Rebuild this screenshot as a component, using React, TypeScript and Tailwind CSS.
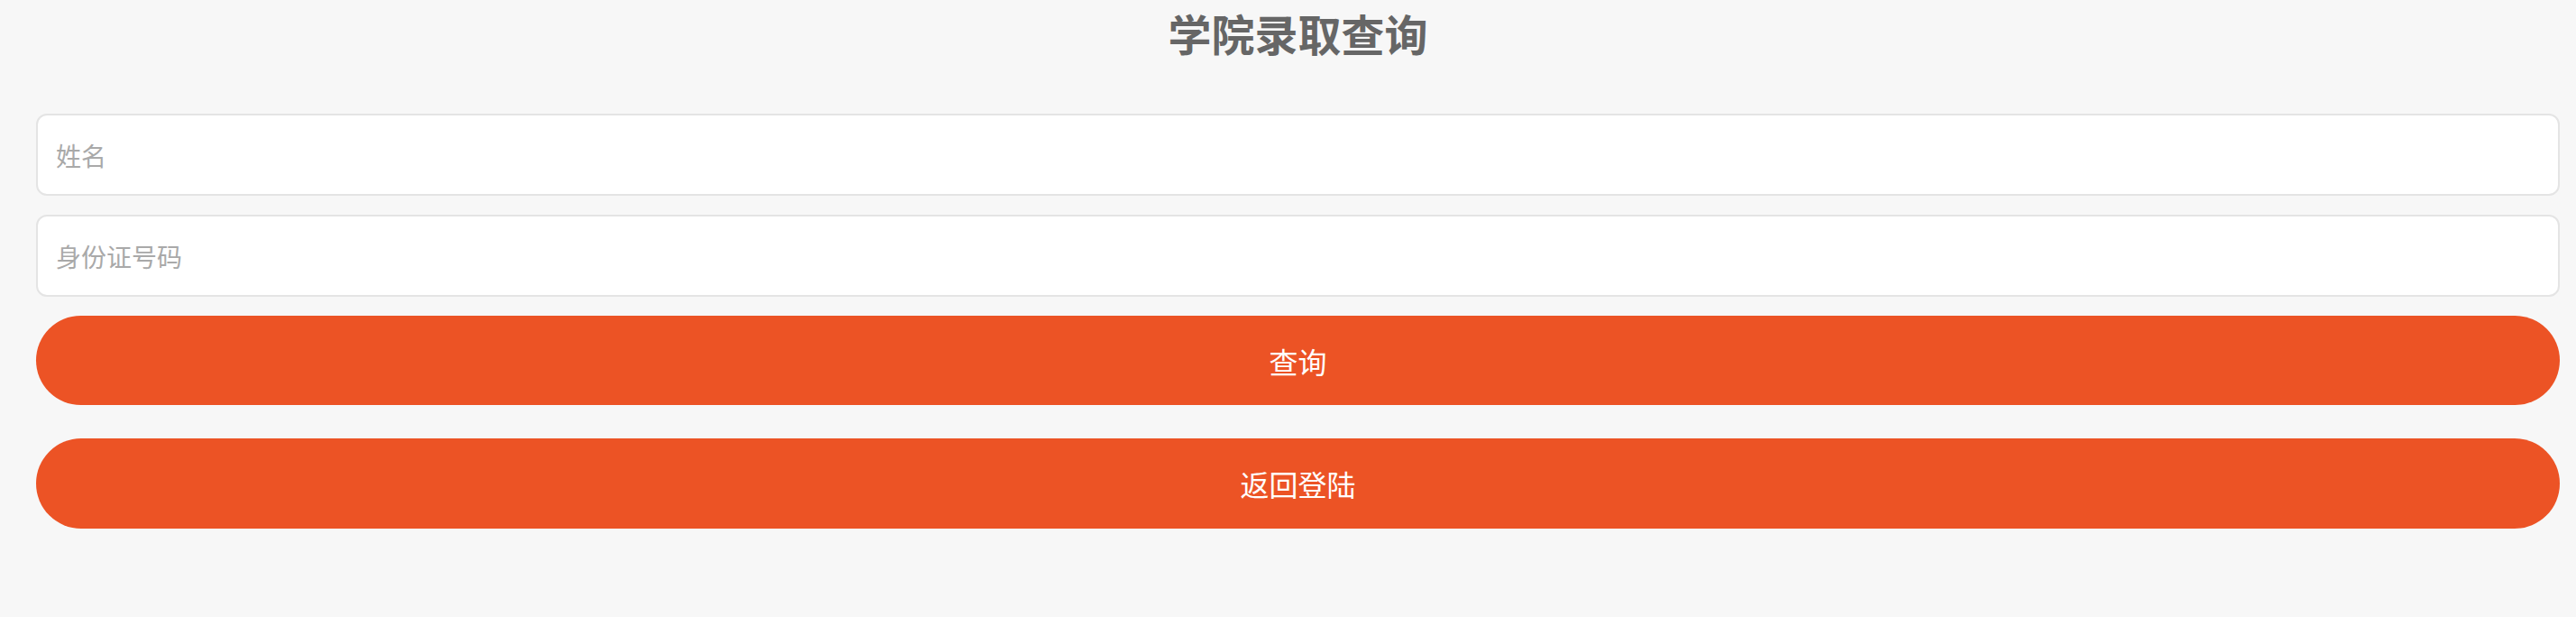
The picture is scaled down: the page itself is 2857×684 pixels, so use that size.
import React from "react";

export default function App() {
  const font = { fontFamily: '"Noto Sans CJK SC", "Noto Sans", sans-serif' };
  return (
    <div className="min-h-[684px] w-full bg-[#f7f7f7] pl-[40px] pr-[18px]" style={font}>
      <h1 className="m-0 h-[72px] text-center text-[48px] font-bold leading-[72px] text-[#666666]">
        学院录取查询
      </h1>
      <div className="flex flex-col pt-[54px]">
        <input
          className="h-[91px] w-full rounded-[12px] border-2 border-[#e4e4e4] bg-white px-[20px] text-[28px] text-[#333] outline-none placeholder:text-[#a9a9a9]"
          placeholder="姓名"
        />
        <input
          className="mt-[21px] h-[91px] w-full rounded-[12px] border-2 border-[#e4e4e4] bg-white px-[20px] text-[28px] text-[#333] outline-none placeholder:text-[#a9a9a9]"
          placeholder="身份证号码"
        />
        <button className="mt-[21px] h-[99px] w-full rounded-full bg-[#ec5325] text-[32px] text-white">
          查询
        </button>
        <button className="mt-[37px] h-[100px] w-full rounded-full bg-[#ec5325] text-[32px] text-white">
          返回登陆
        </button>
      </div>
    </div>
  );
}
